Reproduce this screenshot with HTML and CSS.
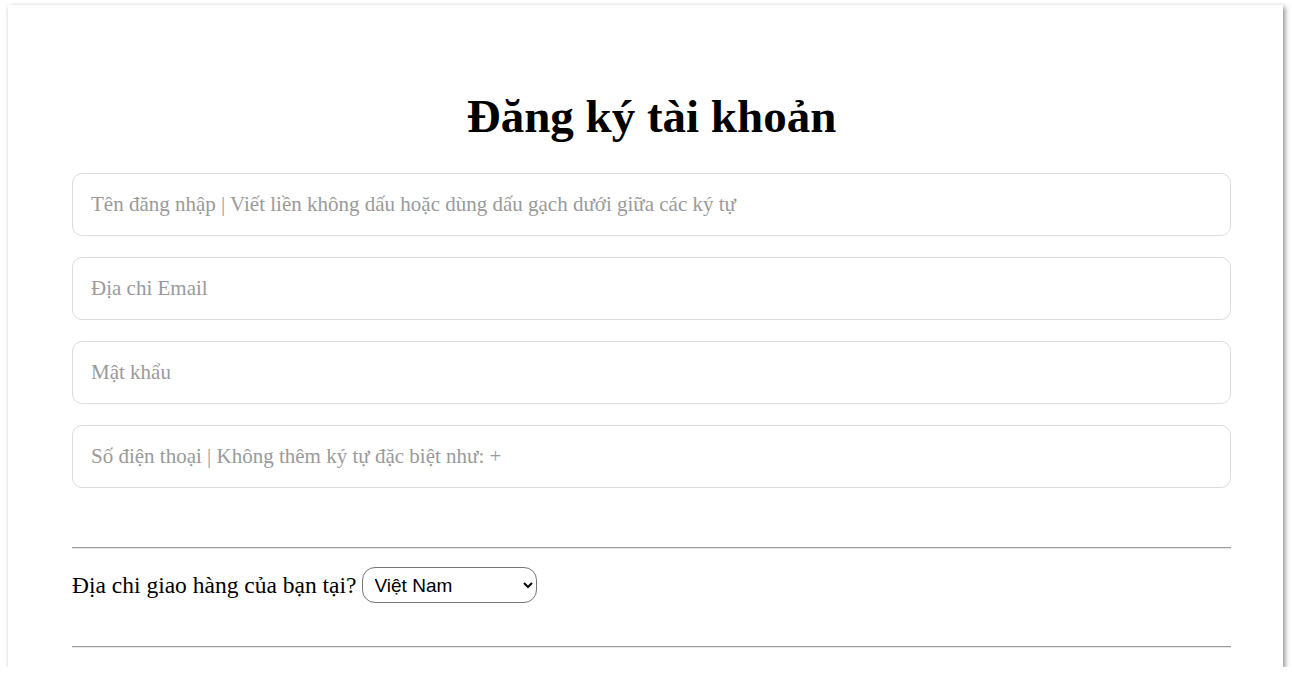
FILE: index.html
```html
<!DOCTYPE html>
<html lang="vi">
<head>
<meta charset="utf-8">
<title>Đăng ký tài khoản</title>
<link rel="stylesheet" href="styles.css">
</head>
<body>
<div class="card">
  <h1 class="title">Đăng ký tài khoản</h1>
  <form class="form">
    <input class="field" type="text" placeholder="Tên đăng nhập | Viết liền không dấu hoặc dùng dấu gạch dưới giữa các ký tự">
    <input class="field" type="email" placeholder="Địa chi Email">
    <input class="field" type="password" placeholder="Mật khẩu">
    <input class="field" type="text" placeholder="Số điện thoại | Không thêm ký tự đặc biệt như: +">
    <hr class="rule rule-top">
    <div class="ship-row">
      <label class="ship-label" for="country">Địa chi giao hàng của bạn tại?</label>
      <select class="country" id="country">
        <option>Việt Nam</option>
        <option>Khác</option>
      </select>
    </div>
    <hr class="rule rule-bottom">
  </form>
</div>
</body>
</html>
```

FILE: styles.css
```css
html, body {
  margin: 0;
  padding: 0;
  background: #ffffff;
}

body {
  font-family: "Liberation Serif", "Times New Roman", serif;
  color: #000;
}

.card {
  box-sizing: border-box;
  width: 1275px;
  height: 662px;
  margin: 5px 0 0 8px;
  padding: 84px 52px 0 64px;
  background: #fff;
  box-shadow: 2px 2px 5px rgba(0, 0, 0, 0.45);
  overflow: hidden;
}

.title {
  margin: 0;
  font-size: 47px;
  line-height: 54px;
  font-weight: bold;
  text-align: center;
}

.form {
  display: flex;
  flex-direction: column;
  margin-top: 30px;
}

.field {
  box-sizing: border-box;
  width: 100%;
  height: 63px;
  margin: 0 0 21px 0;
  padding: 0 18px;
  border: 1px solid #dcdcdc;
  border-radius: 10px;
  font-family: "Liberation Serif", "Times New Roman", serif;
  font-size: 21px;
  color: #333;
  background: #fff;
  outline: none;
}

.field::placeholder {
  color: #9a9a9a;
}

.rule {
  width: 100%;
  height: 0;
  margin: 0;
  border: 0;
  border-top: 1px solid #9c9c9c;
  border-bottom: 1px solid #e6e6e6;
}

.rule-top {
  margin-top: 38px;
}

.ship-row {
  display: flex;
  align-items: center;
  gap: 5px;
  margin-top: 18px;
  height: 36px;
}

.ship-label {
  font-size: 23.5px;
}

.country {
  box-sizing: border-box;
  width: 175px;
  height: 36px;
  padding: 0 6px 0 8px;
  border: 1px solid #767676;
  border-radius: 13px;
  background: #fff;
  font-family: "Liberation Sans", Arial, sans-serif;
  font-size: 19px;
  color: #000;
}

.rule-bottom {
  margin-top: 43px;
}
```
